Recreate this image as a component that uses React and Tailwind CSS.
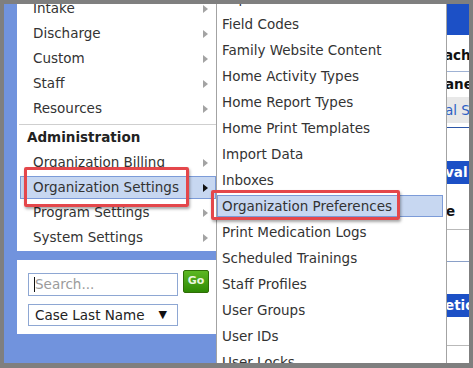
import React from 'react';

const font = "font-['DejaVu_Sans',sans-serif]";

const topItems = ['Intake', 'Discharge', 'Custom', 'Staff', 'Resources'];
const adminItems = ['Organization Billing', 'Organization Settings', 'Program Settings', 'System Settings'];
const subItems = [
  'Exports',
  'Field Codes',
  'Family Website Content',
  'Home Activity Types',
  'Home Report Types',
  'Home Print Templates',
  'Import Data',
  'Inboxes',
  'Organization Preferences',
  'Print Medication Logs',
  'Scheduled Trainings',
  'Staff Profiles',
  'User Groups',
  'User IDs',
  'User Locks',
];

const Arrow = ({ dark }) => (
  <span
    className={
      dark
        ? 'w-0 h-0 border-y-[4px] border-y-transparent border-l-[5px] border-l-[#111]'
        : 'w-0 h-0 border-y-[4px] border-y-transparent border-l-[5px] border-l-[#a3a3a3]'
    }
  />
);

const MenuRow = ({ label }) => (
  <div className="flex items-center justify-between h-[25px] pl-[16px] pr-[8px] whitespace-nowrap">
    <span>{label}</span>
    <Arrow />
  </div>
);

export default function App() {
  return (
    <div
      className={`relative w-[473px] h-[368px] overflow-hidden border-4 border-b-[5px] border-[#7f7f7f] bg-white flex text-[13.5px] text-[#333] ${font}`}
    >
      {/* left nav column */}
      <div className="w-[212px] shrink-0 bg-[#7193dd] pl-[13px]">
        <div className="bg-white -mt-[8px] pb-[1px]">
          {topItems.map(item => (
            <MenuRow key={item} label={item} />
          ))}
          <div className="mt-[3px] ml-[2px] h-[1px] bg-[#cfcfcf]" />
          <div className="flex items-center h-[25px] pl-[10px] font-bold text-[#222]">Administration</div>
          {adminItems.map(item =>
            item === 'Organization Settings' ? (
              <div key={item} className="h-[25px] py-[1px] pl-[3px]">
                <div className="h-full flex items-center justify-between pl-[12px] pr-[7px] bg-[#c7d7f1] border border-[#7c9bd8] whitespace-nowrap">
                  <span>{item}</span>
                  <Arrow dark />
                </div>
              </div>
            ) : (
              <MenuRow key={item} label={item} />
            )
          )}
        </div>

        {/* search box */}
        <div className="mt-[9px] h-[74px] bg-white pt-[10px] pl-[11px]">
          <div className="flex items-start gap-[5px]">
            <div className="mt-[3px] w-[150px] h-[23px] border border-[#8ea7d3] flex items-center pl-[5px]">
              <span className="w-[1px] h-[15px] bg-[#111]" />
              <span className="text-[#9b9b9b]">Search...</span>
            </div>
            <div className="w-[26px] h-[23px] rounded-[2px] border border-[#2f6d06] bg-gradient-to-b from-[#5cb821] to-[#2e8a04] flex items-center justify-center text-[11px] font-bold text-[#eaf5df]">
              Go
            </div>
          </div>
          <div className="mt-[8px] w-[150px] h-[22px] border border-[#8ea7d3] flex items-center justify-between pl-[6px] pr-[10px] text-[#222]">
            <span>Case Last Name</span>
            <span className="text-[11px] text-[#111]">▼</span>
          </div>
        </div>
      </div>

      {/* submenu */}
      <div className="w-[231px] shrink-0 bg-white border-x border-[#a3a3a3]">
        <div className="-mt-[19px]">
          {subItems.map(item =>
            item === 'Organization Preferences' ? (
              <div key={item} className="h-[26px] py-[2px] pr-[3px]">
                <div className="h-full flex items-center pl-[4px] bg-[#c7d7f1] border border-[#7c9bd8] whitespace-nowrap">
                  {item}
                </div>
              </div>
            ) : (
              <div key={item} className="h-[26px] flex items-center pl-[5px] whitespace-nowrap">
                {item}
              </div>
            )
          )}
        </div>
      </div>

      {/* page behind menu */}
      <div className="w-[22px] shrink-0 flex flex-col overflow-hidden whitespace-nowrap font-bold text-[#111]">
        <div className="h-[31px] bg-[#1c50c6]" />
        <div className="h-[37px] flex items-end pb-[6px] -ml-[3px] border-b border-[#9fb2d4]">achments</div>
        <div className="h-[25px] flex items-center -ml-[2px]">anent</div>
        <div className="h-[26px] flex items-center -ml-[2px] bg-[#e8e8e8] font-normal text-[#2d5fc4]">al Services</div>
        <div className="h-[4px]" />
        <div className="h-[1px] bg-[#2c56a8]" />
        <div className="h-[33px]" />
        <div className="h-[23px] flex items-center -ml-[2px] bg-[#1c50c6] text-white">val</div>
        <div className="h-[45px] flex items-center pt-[10px] -ml-[1px]">e</div>
        <div className="h-[1px] bg-[#b9b9b9]" />
        <div className="h-[31px]" />
        <div className="h-[1px] bg-[#8aa0c8]" />
        <div className="h-[32px]" />
        <div className="h-[23px] flex items-center -ml-[2px] bg-[#1c50c6] text-white">etics</div>
        <div className="h-[28px]" />
        <div className="h-[1px] bg-[#b9b9b9]" />
      </div>

      {/* annotation boxes */}
      <div className="absolute left-[20px] top-[163px] w-[165px] h-[40px] border-[3px] border-[#e4474b] rounded-[2px] shadow-[1px_2px_3px_rgba(0,0,0,0.35)]" />
      <div className="absolute left-[207px] top-[186px] w-[189px] h-[30px] border-[3px] border-[#e4474b] rounded-[2px] shadow-[1px_2px_3px_rgba(0,0,0,0.35)]" />
    </div>
  );
}
